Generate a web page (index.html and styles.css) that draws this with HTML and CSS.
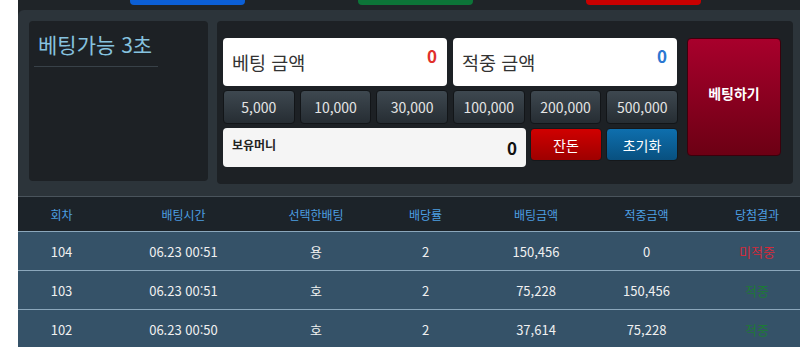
FILE: index.html
```html
<!DOCTYPE html>
<html lang="ko">
<head>
    <meta charset="UTF-8">
    <meta name="viewport" content="width=device-width, initial-scale=1.0">
    <title>베팅</title>
    <link rel="stylesheet" href="styles.css">
</head>
<body>
    <div class="wrap">
        <div class="top-bar">
            <span class="tab tab-blue"></span>
            <span class="tab tab-green"></span>
            <span class="tab tab-red"></span>
        </div>

        <div class="bet-panel">
            <div class="timer-box">
                <h2 class="timer">베팅가능 3초</h2>
            </div>
            <div class="bet-box">
                <div class="bet-main">
                    <div class="amount-row">
                        <div class="amount">
                            <span class="amount-label">베팅 금액</span>
                            <span class="amount-value red">0</span>
                        </div>
                        <div class="amount">
                            <span class="amount-label">적중 금액</span>
                            <span class="amount-value blue">0</span>
                        </div>
                    </div>
                    <div class="chips">
                        <button class="chip">5,000</button>
                        <button class="chip">10,000</button>
                        <button class="chip">30,000</button>
                        <button class="chip">100,000</button>
                        <button class="chip">200,000</button>
                        <button class="chip">500,000</button>
                    </div>
                    <div class="money-row">
                        <div class="money">
                            <span class="money-label">보유머니</span>
                            <span class="money-value">0</span>
                        </div>
                        <button class="btn btn-change">잔돈</button>
                        <button class="btn btn-reset">초기화</button>
                    </div>
                </div>
                <button class="btn-bet">베팅하기</button>
            </div>
        </div>

        <table class="history">
            <thead>
                <tr>
                    <th class="c1">회차</th>
                    <th class="c2">배팅시간</th>
                    <th class="c3">선택한배팅</th>
                    <th class="c4">배당률</th>
                    <th class="c5">배팅금액</th>
                    <th class="c6">적중금액</th>
                    <th class="c7">당첨결과</th>
                </tr>
            </thead>
            <tbody>
                <tr>
                    <td>104</td>
                    <td>06.23 00:51</td>
                    <td>용</td>
                    <td>2</td>
                    <td>150,456</td>
                    <td>0</td>
                    <td class="lose">미적중</td>
                </tr>
                <tr>
                    <td>103</td>
                    <td>06.23 00:51</td>
                    <td>호</td>
                    <td>2</td>
                    <td>75,228</td>
                    <td>150,456</td>
                    <td class="win">적중</td>
                </tr>
                <tr>
                    <td>102</td>
                    <td>06.23 00:50</td>
                    <td>호</td>
                    <td>2</td>
                    <td>37,614</td>
                    <td>75,228</td>
                    <td class="win">적중</td>
                </tr>
            </tbody>
        </table>
    </div>
</body>
</html>
```

FILE: styles.css
```css
html, body {
    margin: 0;
    overflow: hidden;
}
body {
    background-color: #fff;
    font-family: "Noto Sans CJK KR", "Noto Sans", sans-serif;
}
.wrap {
    width: 794px;
    margin-left: 18px;
    background-color: #1f2428;
}
.top-bar {
    display: flex;
    gap: 113px;
    height: 10px;
    padding-left: 112px;
}
.tab {
    width: 115px;
    height: 5px;
    border-radius: 0 0 4px 4px;
}
.tab-blue {
    background-color: #0b5fd6;
}
.tab-green {
    background-color: #0c7438;
}
.tab-red {
    background-color: #c80000;
}
.bet-panel {
    display: flex;
    gap: 9px;
    height: 186px;
    box-sizing: border-box;
    padding: 11px 19px 12px 11px;
    background-color: #2c343a;
    border-radius: 6px 6px 0 0;
}
.timer-box {
    width: 180px;
    height: 160px;
    background-color: #1d2125;
    border-radius: 4px;
    padding-top: 10px;
    box-sizing: border-box;
}
.timer {
    width: 116px;
    margin: 0 0 0 5px;
    padding: 0 4px 8px;
    border-bottom: 1px solid #384148;
    color: #86c2df;
    font-size: 21px;
    font-weight: normal;
    line-height: 27px;
    white-space: nowrap;
}
.bet-box {
    display: flex;
    gap: 9px;
    flex: 1;
    height: 163px;
    box-sizing: border-box;
    padding: 17px 12px 0 6px;
    background-color: #1d2125;
    border-radius: 4px;
}
.bet-main {
    width: 455px;
}
.amount-row {
    display: flex;
    gap: 6px;
}
.amount {
    display: flex;
    justify-content: space-between;
    align-items: center;
    width: 224px;
    height: 48px;
    box-sizing: border-box;
    padding: 0 10px 0 9px;
    background-color: #fff;
    border-radius: 4px;
}
.amount-label {
    color: #333;
    font-size: 18.5px;
}
.amount-value {
    align-self: flex-start;
    margin-top: 5px;
    font-size: 17px;
    font-weight: bold;
}
.red {
    color: #e0302c;
}
.blue {
    color: #2b78d2;
}
.chips {
    display: flex;
    gap: 5px;
    margin-top: 4px;
}
.chip {
    flex: 1;
    height: 34px;
    padding: 0;
    border: 1px solid #121518;
    border-radius: 4px;
    background: linear-gradient(#3e4850, #262d33);
    color: #e4e4e4;
    font-family: inherit;
    font-size: 14px;
}
.money-row {
    display: flex;
    align-items: flex-start;
    gap: 4px;
    margin-top: 4px;
}
.money {
    display: flex;
    justify-content: space-between;
    align-items: center;
    width: 303px;
    height: 39px;
    box-sizing: border-box;
    padding: 0 9px;
    background-color: #f5f5f5;
    border-radius: 4px;
}
.money-label {
    margin-bottom: 6px;
    color: #222;
    font-size: 12px;
    font-weight: bold;
}
.money-value {
    color: #111;
    font-size: 17px;
    font-weight: bold;
}
.btn {
    flex: 1;
    height: 33px;
    padding: 0;
    border: 1px solid #15181b;
    border-radius: 4px;
    color: #fff;
    font-family: inherit;
    font-size: 14px;
}
.btn-change {
    background: linear-gradient(#d00000, #9e0000);
}
.btn-reset {
    background: linear-gradient(#0e6fae, #08507f);
}
.btn-bet {
    width: 94px;
    height: 118px;
    padding: 0 0 8px;
    border: 1px solid #3b000c;
    border-radius: 4px;
    background: linear-gradient(#a8002c, #6c0014);
    color: #fff;
    font-family: inherit;
    font-size: 14px;
    font-weight: bold;
}
.history {
    width: 794px;
    table-layout: fixed;
    border-collapse: collapse;
    font-size: 13px;
    text-align: center;
}
.history th {
    height: 34px;
    padding: 0;
    border-top: 1px solid #4a545c;
    background-color: #1c2329;
    color: #4c9fe2;
    font-size: 12px;
    font-weight: normal;
}
.history td {
    height: 38px;
    padding: 0;
    border-top: 1px solid #8ba7bb;
    background-color: #355268;
    color: #f0f0f0;
}
.c1 { width: 87px; }
.c2 { width: 157px; }
.c3 { width: 108px; }
.c4 { width: 111px; }
.c5 { width: 110px; }
.c6 { width: 111px; }
.c7 { width: 110px; }
.history .lose {
    color: #d42a3a;
}
.history .win {
    color: #1d7a36;
}
```
